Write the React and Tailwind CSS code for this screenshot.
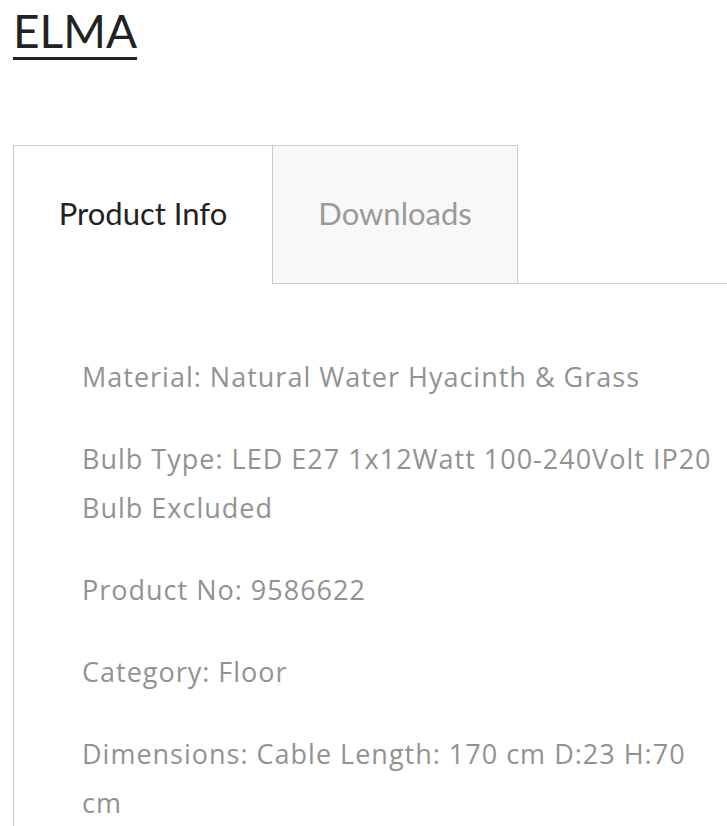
import React from "react";

const specs = [
  ["Material: Natural Water Hyacinth & Grass"],
  ["Bulb Type: LED E27 1x12Watt 100-240Volt IP20", "Bulb Excluded"],
  ["Product No: 9586622"],
  ["Category: Floor"],
  ["Dimensions: Cable Length: 170 cm D:23 H:70", "cm"],
];

export default function App() {
  return (
    <div className="w-[727px] h-[826px] overflow-hidden bg-white">
      <h1 className="pl-[13px] pt-[8px] text-[46px] leading-none text-[#222] font-['Lato',sans-serif] font-normal">
        <span className="underline decoration-[3px] underline-offset-[9px]">ELMA</span>
      </h1>

      <div className="mt-[91px] ml-[13px] w-[760px]">
        {/* tabs */}
        <div className="flex h-[139px] font-['Lato',sans-serif] text-[31px]">
          <div className="w-[260px] border border-b-0 border-[#cccccc] bg-white flex items-center justify-center pb-[4px] text-[#222]">
            Product Info
          </div>
          <div className="w-[245px] border-t border-r border-b border-[#cccccc] bg-[#f8f8f8] flex items-center justify-center pb-[3px] text-[#9a9a9a]">
            Downloads
          </div>
          <div className="flex-1 border-b border-[#cccccc]"></div>
        </div>

        {/* panel */}
        <div className="border-l border-[#cccccc] pl-[68px] pt-[68px] pb-10 font-['Open_Sans',sans-serif] text-[27px] leading-[49px] tracking-[1px] text-[#929292]">
          {specs.map((lines, i) => (
            <p key={i} className="mb-[33px] whitespace-nowrap">
              {lines.map((l, j) => (
                <React.Fragment key={j}>
                  {j > 0 && <br />}
                  {l}
                </React.Fragment>
              ))}
            </p>
          ))}
        </div>
      </div>
    </div>
  );
}
